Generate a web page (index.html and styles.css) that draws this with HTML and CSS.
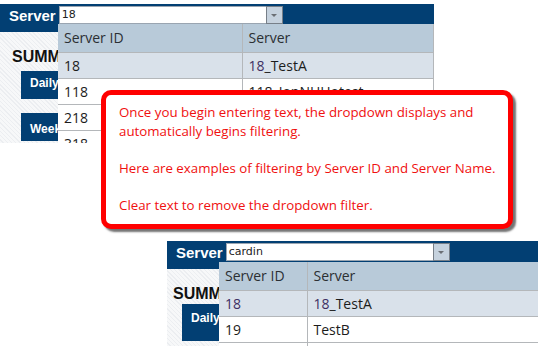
FILE: index.html
```html
<!DOCTYPE html>
<html lang="en">
<head>
  <meta charset="UTF-8">
  <title>Server dropdown filtering</title>
  <link rel="stylesheet" href="styles.css">
</head>
<body>
  <div class="canvas">

    <!-- first capture: filtering by id -->
    <div class="shot shot-top">
      <div class="bar">
        <span class="bar-label">Server</span>
        <div class="combo">
          <span class="combo-text">18</span>
          <span class="combo-btn"><span class="caret"></span></span>
        </div>
      </div>
      <div class="side">
        <div class="summ">SUMM</div>
        <div class="side-btn">Daily</div>
        <div class="side-btn week">Weekly</div>
      </div>
      <table class="drop">
        <tr class="head"><th class="col-id">Server ID</th><th>Server</th></tr>
        <tr class="hit"><td>18</td><td><span class="match">18</span>_TestA</td></tr>
        <tr><td>118</td><td>118_JonNHHotest</td></tr>
        <tr><td>218</td><td>218_Test</td></tr>
        <tr><td>318</td><td>318_Test</td></tr>
      </table>
    </div>

    <!-- second capture: filtering by name -->
    <div class="shot shot-bottom">
      <div class="bar">
        <span class="bar-label">Server</span>
        <div class="combo">
          <span class="combo-text">cardin</span>
          <span class="combo-btn"><span class="caret"></span></span>
        </div>
      </div>
      <div class="side">
        <div class="summ">SUMM</div>
        <div class="side-btn">Daily</div>
      </div>
      <table class="drop">
        <tr class="head"><th class="col-id">Server ID</th><th>Server</th></tr>
        <tr class="hit"><td><span class="match">18</span></td><td><span class="match">18</span>_TestA</td></tr>
        <tr><td>19</td><td>TestB</td></tr>
        <tr><td>20</td><td>TestC</td></tr>
      </table>
    </div>

    <div class="callout">
      <p>Once you begin entering text, the dropdown displays and automatically begins filtering.</p>
      <p>Here are examples of filtering by Server ID and Server Name.</p>
      <p>Clear text to remove the dropdown filter.</p>
    </div>

  </div>
</body>
</html>
```

FILE: styles.css
```css
* {
  box-sizing: border-box;
  margin: 0;
  padding: 0;
}

body {
  background-color: #ffffff;
  font-family: 'Open Sans', 'Noto Sans', sans-serif;
  overflow: hidden;
}

.canvas {
  position: relative;
  width: 538px;
  height: 346px;
  padding-top: 4px;
}

.shot {
  position: relative;
  overflow: hidden;
  background-color: #f3f4f6;
  background-image: repeating-linear-gradient(45deg, #f7f8f9 0 2px, #eceef1 2px 3px);
}

.shot-top {
  width: 434px;
  height: 139px;
}

.shot-bottom {
  margin: 98px 0 0 167px;
  width: 371px;
  height: 105px;
}

.bar {
  background-color: #023f73;
  height: 28px;
  display: flex;
  align-items: flex-start;
  padding: 2px 0 0 9px;
  gap: 3px;
}

.bar-label {
  font-family: 'Liberation Sans', Arial, sans-serif;
  font-weight: bold;
  font-size: 15px;
  color: #ffffff;
  line-height: 20px;
}

.combo {
  display: flex;
  width: 224px;
  height: 18px;
  background-color: #ffffff;
  border: 1px solid #9aa5b1;
}

.combo-text {
  flex: 1;
  font-family: 'DejaVu Sans', sans-serif;
  font-size: 11px;
  line-height: 16px;
  padding-left: 2px;
  color: #222;
}

.combo-btn {
  width: 17px;
  margin: -1px -1px -1px 0;
  background-color: #c6d2de;
  border: 1px solid #777f88;
  display: flex;
  align-items: center;
  justify-content: center;
}

.caret {
  border-left: 3px solid transparent;
  border-right: 3px solid transparent;
  border-top: 3px solid #6b6f74;
}

.side {
  padding: 16px 0 0 12px;
  display: flex;
  flex-direction: column;
  align-items: flex-start;
}

.summ {
  font-family: 'Liberation Sans', Arial, sans-serif;
  font-weight: bold;
  font-size: 16px;
  line-height: 18px;
  color: #111;
}

.side-btn {
  margin: 5px 0 0 9px;
  width: 70px;
  height: 28px;
  background-color: #023f73;
  color: #ffffff;
  font-family: 'Liberation Sans', Arial, sans-serif;
  font-weight: bold;
  font-size: 12px;
  padding: 5px 0 0 9px;
}

.side-btn.week {
  margin-top: 14px;
  padding-top: 9px;
}

.shot-bottom .side {
  padding: 16px 0 0 6px;
}

.shot-bottom .side-btn {
  margin: 1px 0 0 9px;
  height: 37px;
  padding-top: 7px;
}

.drop {
  position: absolute;
  border-collapse: collapse;
  background-color: #ffffff;
  font-size: 14px;
  color: #1c1c1c;
}

.shot-top .drop {
  left: 58px;
  top: 20px;
  width: 376px;
}

.shot-top .col-id {
  width: 184px;
}

.shot-bottom .drop {
  left: 52px;
  top: 21px;
  width: 340px;
}

.shot-bottom .col-id {
  width: 88px;
}

.drop th,
.drop td {
  height: 26px;
  padding: 0 6px;
  text-align: left;
  font-weight: normal;
  border-bottom: 1px solid #b4b7ba;
  border-right: 1px solid #b4b7ba;
  white-space: nowrap;
}

.drop th {
  height: 28px;
  background-color: #b8cad9;
  color: #2b2f33;
}

.drop .hit td {
  background-color: #d9e1ea;
}

.match {
  color: #3d2f63;
}

.callout {
  position: absolute;
  left: 101px;
  top: 90px;
  width: 412px;
  height: 139px;
  background-color: #ffffff;
  border: 5px solid #ff0000;
  border-radius: 10px;
  box-shadow: 3px 3px 2px rgba(0, 0, 0, 0.55);
  padding: 8px 8px 0 13px;
  color: #f01010;
  font-size: 13.3px;
  line-height: 18.6px;
}

.callout p + p {
  margin-top: 18.6px;
}
```
